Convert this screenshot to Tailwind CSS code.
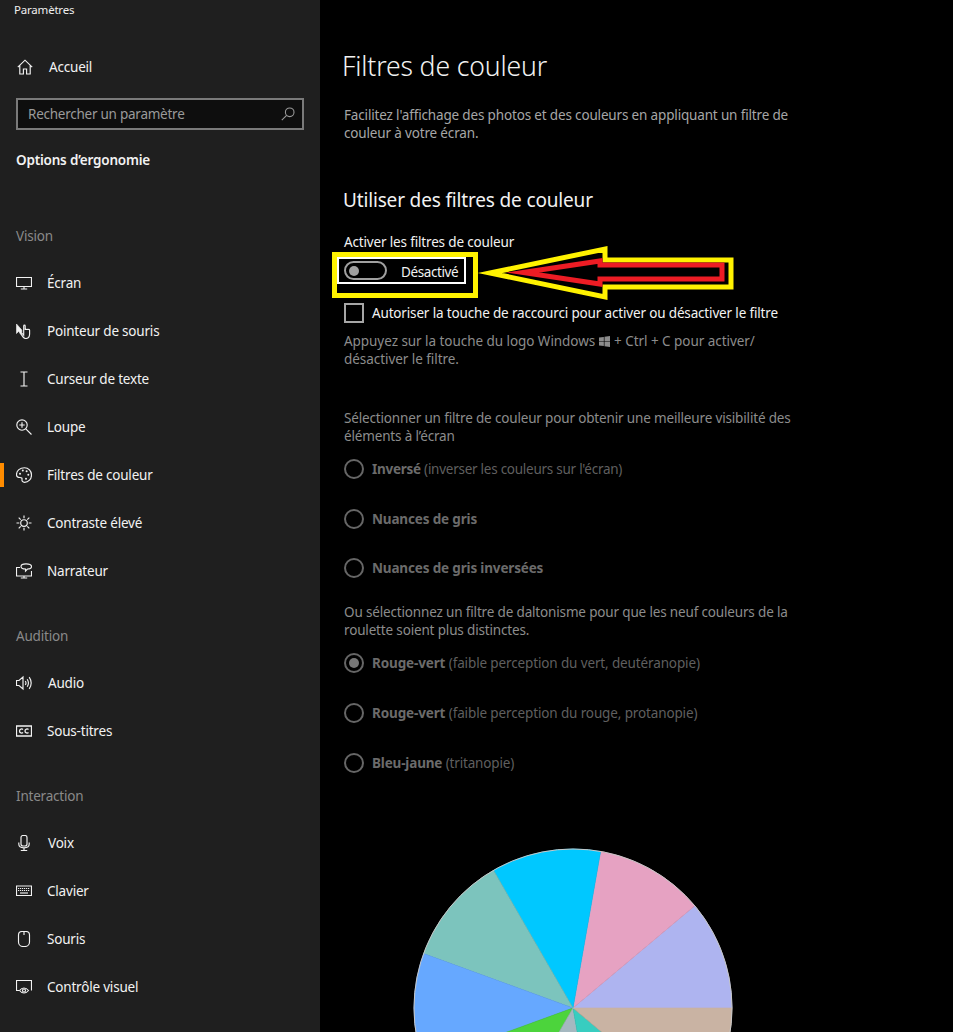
<!DOCTYPE html>
<html lang="fr">
<head>
    <meta charset="UTF-8">
    <title>Paramètres</title>
    <script src="https://cdn.jsdelivr.net/npm/@tailwindcss/browser@4"></script>
</head>
<body class="bg-black">
<div class="flex h-[1032px] w-[953px] overflow-hidden font-['Noto_Sans',sans-serif] text-[13.5px] leading-[18px] tracking-[-0.16px] text-white">

    <!-- sidebar -->
    <aside class="w-[320px] shrink-0 bg-[#1f1f1f] tracking-[-0.2px]">
        <div class="h-[20px] pl-[14px] text-[11.5px] leading-[20px] text-[#eeeeee]">Paramètres</div>

        <div class="mt-[27px] flex h-[40px] items-center pl-[17px] text-[#f2f2f2]">
            <svg class="h-[16px] w-[16px]" viewBox="0 0 16 16" fill="none" stroke="currentColor" stroke-width="1.15"><path d="M.8 8.200 8 1.200l7.200 7M2.800 6.600v8.400h3.600v-5h3.200v5h3.600V6.600"/></svg>
            <span class="ml-[16px]">Accueil</span>
        </div>

        <div class="mx-[16px] mt-[11px] flex h-[32px] items-center justify-between border-2 border-[#7a7a7a] bg-[#0e0e0e] pb-[1px] pl-[10px] pr-[7px] tracking-[-0.25px] text-[#9a9a9a]">
            <span>Rechercher un paramètre</span>
            <svg class="h-[14px] w-[14px]" viewBox="0 0 14 14" fill="none" stroke="currentColor" stroke-width="1.1"><circle cx="8.700" cy="5.300" r="4.300"/><path d="M5.600 8.400.8 13.200"/></svg>
        </div>

        <div class="mt-[21px] h-[18px] pl-[16px] font-semibold text-[#f2f2f2]">Options d’ergonomie</div>

        <div class="mt-[58px] h-[18px] pl-[16px] text-[#8a8a8a]">Vision</div>

        <div class="mt-[14px]">
            <div class="flex h-[48px] items-center pl-[16px] text-[#f2f2f2]">
                <svg class="h-[16px] w-[16px]" viewBox="0 0 16 16" fill="none" stroke="currentColor" stroke-width="1.15"><path d="M.5 2.500h15v9H.5zM8 11.500v2.500M4.800 14h6.400"/></svg>
                <span class="ml-[15px]">Écran</span>
            </div>
            <div class="flex h-[48px] items-center pl-[16px] text-[#f2f2f2]">
                <svg class="h-[16px] w-[16px]" viewBox="0 0 16 16" fill="none" stroke="currentColor" stroke-width="1.15"><path fill="currentColor" stroke-width=".6" d="M.5 1v9.500l2.300-2.200 1.700 3 1.300-1V7z"/><path d="M9.500 15.500c-2 0-2.600-1.300-4-3.800-.5-1 .6-1.500 1.200-.7l1 1.200V3c0-1.200 1.500-1.200 1.500 0v4c0-1 1.500-1 1.500 0 0-1 1.500-1 1.500 0 0-.8 1.400-.8 1.400.2v3.800c0 2.700-1.100 4.500-4.100 4.500z"/></svg>
                <span class="ml-[15px]">Pointeur de souris</span>
            </div>
            <div class="flex h-[48px] items-center pl-[16px] text-[#f2f2f2]">
                <svg class="h-[16px] w-[16px]" viewBox="0 0 16 16" fill="none" stroke="currentColor" stroke-width="1.15"><path d="M4.500 1h7M8 1v14M4.500 15h7"/></svg>
                <span class="ml-[15px]">Curseur de texte</span>
            </div>
            <div class="flex h-[48px] items-center pl-[16px] text-[#f2f2f2]">
                <svg class="h-[16px] w-[16px]" viewBox="0 0 16 16" fill="none" stroke="currentColor" stroke-width="1.15"><circle cx="6" cy="6" r="5.200"/><path d="M3.300 6h5.400M6 3.300v5.400M9.800 9.800l5.700 5.700"/></svg>
                <span class="ml-[15px]">Loupe</span>
            </div>
            <div class="relative flex h-[48px] items-center pl-[16px] text-[#f2f2f2]">
                <div class="absolute left-0 top-[12px] h-[24px] w-[4px] bg-[#ff8c00]"></div>
                <svg class="h-[16px] w-[16px]" viewBox="0 0 16 16" fill="none" stroke="currentColor" stroke-width="1.15"><path d="M8.500.7C4 .7.500 3.500.500 7.500c0 2.500 2 3 3.500 3 1.500 0 2.300.6 2 2-.3 1.500.7 2.800 2.500 2.800 4 0 7-3.300 7-7.300S12.500.7 8.500.7z"/><circle cx="4" cy="6.800" r="1" fill="currentColor" stroke="none"/><circle cx="6.800" cy="3.600" r="1" fill="currentColor" stroke="none"/><circle cx="10.600" cy="4.200" r="1" fill="currentColor" stroke="none"/><circle cx="12.300" cy="7.800" r="1" fill="currentColor" stroke="none"/><circle cx="10" cy="11.800" r="1" fill="currentColor" stroke="none"/></svg>
                <span class="ml-[15px]">Filtres de couleur</span>
            </div>
            <div class="flex h-[48px] items-center pl-[16px] text-[#f2f2f2]">
                <svg class="h-[16px] w-[16px]" viewBox="0 0 16 16" fill="none" stroke="currentColor" stroke-width="1.15"><circle cx="8" cy="8" r="3.300"/><path d="M8 .5v2.800M8 12.700v2.800M.5 8h2.800M12.700 8h2.800M2.700 2.700l2 2M11.300 11.300l2 2M2.700 13.300l2-2M11.300 4.700l2-2"/></svg>
                <span class="ml-[15px]">Contraste élevé</span>
            </div>
            <div class="flex h-[48px] items-center pl-[16px] text-[#f2f2f2]">
                <svg class="h-[16px] w-[16px]" viewBox="0 0 16 16" fill="none" stroke="currentColor" stroke-width="1.15"><path d="M4 4.500H.5v8.500h15V8M8 13v2M4.800 15h6.400M5 3.500C5 1.800 7 .8 10 .8s5.500 1 5.500 2.700S13.500 6 11.500 6L9.500 8V6C7 6 5 5.200 5 3.500z"/></svg>
                <span class="ml-[15px]">Narrateur</span>
            </div>
        </div>

        <div class="mt-[32px] h-[18px] pl-[16px] text-[#8a8a8a]">Audition</div>

        <div class="mt-[14px]">
            <div class="flex h-[48px] items-center pl-[16px] text-[#f2f2f2]">
                <svg class="h-[16px] w-[16px]" viewBox="0 0 16 16" fill="none" stroke="currentColor" stroke-width="1.15"><path d="M.5 5.500h2.500L7 2v12l-4-3.500H.5zM9.300 6c.8 1.200.8 2.800 0 4M11.200 4.200c1.500 2.300 1.500 5.300 0 7.600M13.200 2.200c2.400 3.500 2.400 8.100 0 11.600"/></svg>
                <span class="ml-[16px]">Audio</span>
            </div>
            <div class="flex h-[48px] items-center pl-[16px] text-[#f2f2f2]">
                <svg class="h-[16px] w-[16px]" viewBox="0 0 16 16" fill="none" stroke="currentColor" stroke-width="1.3"><path d="M.5 3h15v10H.5zM7 6.500C6 5.500 3.500 5.800 3.500 8s2.500 2.500 3.500 1.500M12.500 6.500c-1-1-3.500-.7-3.500 1.500s2.500 2.500 3.500 1.500"/></svg>
                <span class="ml-[15px]">Sous-titres</span>
            </div>
        </div>

        <div class="mt-[32px] h-[18px] pl-[16px] text-[#8a8a8a]">Interaction</div>

        <div class="mt-[14px]">
            <div class="flex h-[48px] items-center pl-[16px] text-[#f2f2f2]">
                <svg class="h-[16px] w-[16px]" viewBox="0 0 16 16" fill="none" stroke="currentColor" stroke-width="1.15"><rect x="5" y=".5" width="6" height="10.500" rx="2"/><path d="M2.800 7.500V9c0 2.500 2 3.800 5.200 3.800s5.200-1.300 5.200-3.800V7.500M8 12.800v2.700M4.800 15.500h6.400"/></svg>
                <span class="ml-[16px]">Voix</span>
            </div>
            <div class="flex h-[48px] items-center pl-[16px] text-[#f2f2f2]">
                <svg class="h-[16px] w-[16px]" viewBox="0 0 16 16" fill="none" stroke="currentColor" stroke-width="1.15"><path d="M.5 3h15v9.500H.5z"/><path d="M2 5.500h12M2 7.500h12" stroke-dasharray="1.200 .8"/><path d="M4 10h8"/></svg>
                <span class="ml-[15px]">Clavier</span>
            </div>
            <div class="flex h-[48px] items-center pl-[16px] text-[#f2f2f2]">
                <svg class="h-[16px] w-[16px]" viewBox="0 0 16 16" fill="none" stroke="currentColor" stroke-width="1.15"><path d="M2.500 4A3.500 3.500 0 0 1 6 .5h4A3.500 3.500 0 0 1 13.500 4v7a4.500 4.500 0 0 1-4.500 4.500H7A4.500 4.500 0 0 1 2.500 11zM8 .5v3.500"/></svg>
                <span class="ml-[15px]">Souris</span>
            </div>
            <div class="flex h-[48px] items-center pl-[16px] text-[#f2f2f2]">
                <svg class="h-[16px] w-[16px]" viewBox="0 0 16 16" fill="none" stroke="currentColor" stroke-width="1.15"><path d="M3 11.500H.5v-10h15v10"/><path d="M3.500 11.500c2.600-3.300 6.400-3.300 9 0-2.600 3.300-6.400 3.300-9 0z"/><circle cx="8" cy="11.500" r="1.500"/></svg>
                <span class="ml-[15px]">Contrôle visuel</span>
            </div>
        </div>
    </aside>

    <!-- main panel -->
    <main class="relative min-w-0 flex-1 pl-[24px]">
        <h1 class="-ml-[2px] mt-[48px] h-[36px] text-[26.6px] font-light leading-[36px] text-[#f2f2f2]">Filtres de couleur</h1>
        <p class="mt-[22px] w-[460px] text-[#a6a6a6]">Facilitez l'affichage des photos et des couleurs en appliquant un filtre de couleur à votre écran.</p>

        <h2 class="-ml-[1px] mt-[45px] h-[26px] text-[19px] leading-[26px] text-[#f2f2f2]">Utiliser des filtres de couleur</h2>

        <div class="mt-[20px] h-[18px] text-[#f2f2f2]">Activer les filtres de couleur</div>

        <!-- yellow callout round the toggle -->
        <div class="-ml-[12px] mt-[1px] h-[46px] w-[146px] border-[5px] border-[#fff200] bg-black">
            <div class="flex h-[27px] w-[129px] items-center border-2 border-white pl-[5px]">
                <div class="flex h-[19px] w-[43px] items-center rounded-full border-2 border-[#a0a0a0] pl-[3px]">
                    <div class="h-[10px] w-[10px] rounded-full bg-[#a0a0a0]"></div>
                </div>
                <span class="ml-[14px] mt-[2px] tracking-[-0.4px] text-[#f2f2f2]">Désactivé</span>
            </div>
        </div>

        <div class="mt-[5px] flex h-[20px] items-center text-[#f2f2f2]">
            <div class="h-[20px] w-[20px] border-2 border-[#a6a6a6]"></div>
            <span class="ml-[8px]">Autoriser la touche de raccourci pour activer ou désactiver le filtre</span>
        </div>

        <p class="mt-[9px] w-[460px] tracking-[-0.05px] text-[#8c8c8c]">Appuyez sur la touche du logo Windows <svg class="mr-[1px] inline-block h-[11px] w-[11px] align-[-1px]" viewBox="0 0 10 10" fill="#8c8c8c"><path d="M0 1.400 4.400.8v3.900H0zM5 .7 10 0v4.700H5zM0 5.300h4.400v3.900L0 8.600zM5 5.300h5V10l-5-.7z"/></svg> + Ctrl + C pour activer/<br>désactiver le filtre.</p>

        <p class="mt-[41px] w-[460px] text-[#8c8c8c]">Sélectionner un filtre de couleur pour obtenir une meilleure visibilité des éléments à l’écran</p>

        <div class="mt-[14px] flex h-[20px] items-center text-[#5f5f5f]">
            <div class="h-[20px] w-[20px] rounded-full border-2 border-[#666666]"></div>
            <span class="ml-[8px] tracking-[-0.26px]"><b class="font-bold text-[#6b6b6b]">Inversé</b> (inverser les couleurs sur l'écran)</span>
        </div>
        <div class="mt-[30px] flex h-[20px] items-center text-[#5f5f5f]">
            <div class="h-[20px] w-[20px] rounded-full border-2 border-[#666666]"></div>
            <span class="ml-[8px]"><b class="font-bold text-[#6b6b6b]">Nuances de gris</b></span>
        </div>
        <div class="mt-[29px] flex h-[20px] items-center text-[#5f5f5f]">
            <div class="h-[20px] w-[20px] rounded-full border-2 border-[#666666]"></div>
            <span class="ml-[8px]"><b class="font-bold text-[#6b6b6b]">Nuances de gris inversées</b></span>
        </div>

        <p class="mt-[25px] w-[460px] text-[#8c8c8c]">Ou sélectionnez un filtre de daltonisme pour que les neuf couleurs de la roulette soient plus distinctes.</p>

        <div class="mt-[14px] flex h-[20px] items-center text-[#5f5f5f]">
            <div class="flex h-[20px] w-[20px] items-center justify-center rounded-full border-2 border-[#666666]">
                <div class="h-[10px] w-[10px] rounded-full bg-[#777777]"></div>
            </div>
            <span class="ml-[8px] tracking-[-0.13px]"><b class="font-bold text-[#6b6b6b]">Rouge-vert</b> (faible perception du vert, deutéranopie)</span>
        </div>
        <div class="mt-[30px] flex h-[20px] items-center text-[#5f5f5f]">
            <div class="h-[20px] w-[20px] rounded-full border-2 border-[#666666]"></div>
            <span class="ml-[8px] tracking-[-0.13px]"><b class="font-bold text-[#6b6b6b]">Rouge-vert</b> (faible perception du rouge, protanopie)</span>
        </div>
        <div class="mt-[30px] flex h-[20px] items-center text-[#5f5f5f]">
            <div class="h-[20px] w-[20px] rounded-full border-2 border-[#666666]"></div>
            <span class="ml-[8px]"><b class="font-bold text-[#6b6b6b]">Bleu-jaune</b> (tritanopie)</span>
        </div>

        <!-- colour wheel -->
        <svg class="ml-[69px] mt-[75px] h-[320px] w-[320px]" viewBox="-160 -160 320 320" stroke-width=".6">
            <path fill="#aeb4f0" stroke="#aeb4f0" d="M0 0 159 0A159 159 0 0 0 121.800 -102.200z"/>
            <path fill="#e6a2c2" stroke="#e6a2c2" d="M0 0 121.800 -102.200A159 159 0 0 0 27.600 -156.600z"/>
            <path fill="#00c8ff" stroke="#00c8ff" d="M0 0 27.600 -156.600A159 159 0 0 0 -79.500 -137.700z"/>
            <path fill="#7cc4bd" stroke="#7cc4bd" d="M0 0 -79.500 -137.700A159 159 0 0 0 -149.400 -54.400z"/>
            <path fill="#66a8ff" stroke="#66a8ff" d="M0 0 -149.400 -54.400A159 159 0 0 0 -149.400 54.400z"/>
            <path fill="#4cd43c" stroke="#4cd43c" d="M0 0 -149.400 54.400A159 159 0 0 0 -79.500 137.700z"/>
            <path fill="#a5b8c0" stroke="#a5b8c0" d="M0 0 -79.500 137.700A159 159 0 0 0 27.600 156.600z"/>
            <path fill="#38cdc0" stroke="#38cdc0" d="M0 0 27.600 156.600A159 159 0 0 0 121.800 102.200z"/>
            <path fill="#c9b3a3" stroke="#c9b3a3" d="M0 0 121.800 102.200A159 159 0 0 0 159 0z"/>
            <circle r="159" fill="none" stroke="#c8c8c8" stroke-width="1"/>
        </svg>

        <!-- arrow annotation drawn on top of the screenshot -->
        <svg class="pointer-events-none absolute left-[150px] top-[240px] h-[70px] w-[270px]" viewBox="470 240 270 70" fill="none" stroke-miterlimit="30">
            <path d="M490 273 605 249v11h126v27H605v10z" fill="#000" stroke="#fff200" stroke-width="5"/>
            <path d="M523 272.500 600 261v4h122v14H600v5z" stroke="#ed1c24" stroke-width="5"/>
        </svg>
    </main>
</div>
</body>
</html>
